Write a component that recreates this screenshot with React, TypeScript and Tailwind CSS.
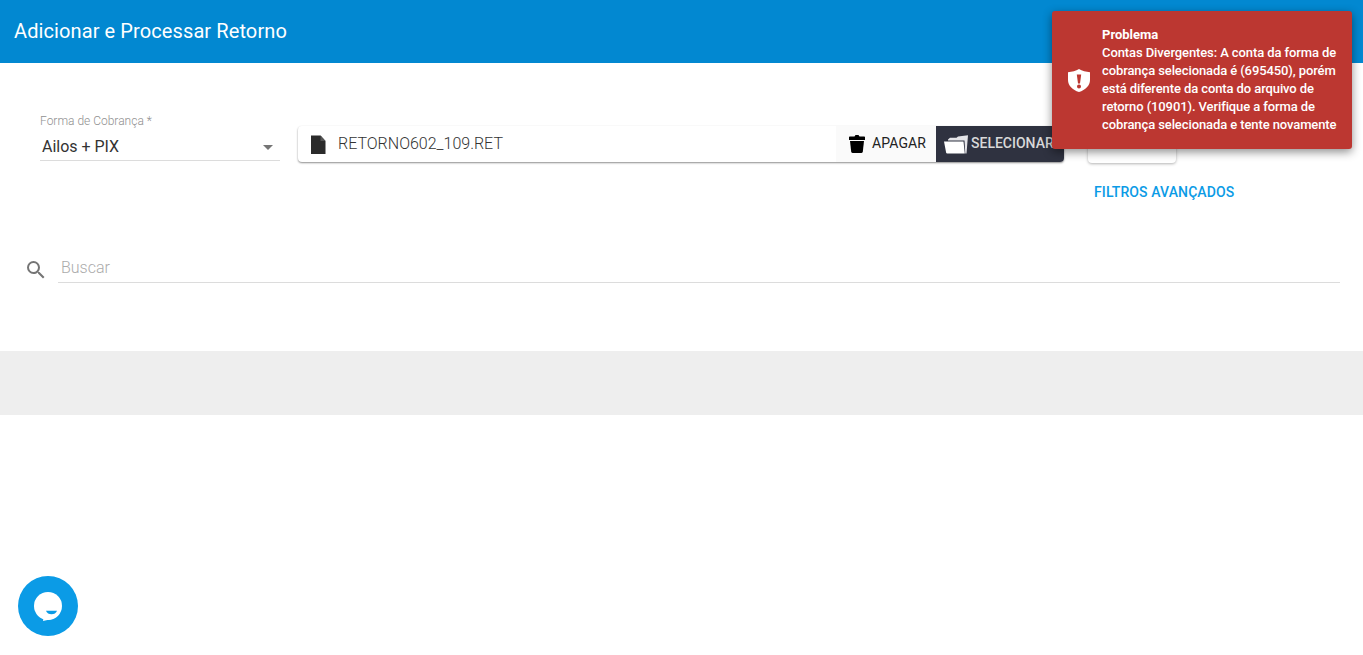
import { MdSearch, MdArrowDropDown } from "react-icons/md";

const font = { fontFamily: "Roboto, sans-serif" };

const FileIcon = () => (
  <svg viewBox="0 0 15 19" className="w-[15px] h-[19px] shrink-0">
    <path fill="#2b2b2b" d="M0 0.500h9.500l5 5.500v13H0Z" />
    <path fill="#555555" d="M9.500 0.500v5.500h5Z" />
  </svg>
);

const TrashIcon = () => (
  <svg viewBox="0 0 16 18" className="w-[16px] h-[18px] shrink-0">
    <path fill="#000000" d="M5.500 1.500 6.500 0h3l1 1.500H15c.6 0 1 .4 1 1V5H0V2.500c0-.6.4-1 1-1Z" />
    <path fill="#000000" d="M1 6h14l-1.200 10.800c-.1.700-.6 1.200-1.300 1.200h-9c-.7 0-1.200-.5-1.300-1.200Z" />
  </svg>
);

const FolderIcon = () => (
  <svg viewBox="0 0 24 19" className="w-[24px] h-[19px] shrink-0">
    <path fill="#e4e4e8" d="M4 4.500 6 2.800h6.500L14 1.500 24 0.300 22.500 18.500h-1.200L20.500 5.500H4Z" />
    <path fill="#ffffff" d="M0 6.500h19.500l1.300 12H3.200c-.6 0-1-.3-1.100-.9Z" />
  </svg>
);

const FormaCobranca = () => (
  <div className="w-[240px] ml-[40px] mr-[18px] shrink-0 mt-[-12px]">
    <div className="text-[12px] leading-[14px] text-[#909090] font-light h-[14px]">Forma de Cobrança *</div>
    <div className="flex items-center justify-between h-[26px] mt-[6px] pl-[2px] border-b border-[#dcdcdc] box-content">
      <span className="text-[16px] text-[#333333] mt-[-1px] tracking-[-0.03px]">Ailos + PIX</span>
      <MdArrowDropDown size={24} className="text-[#757575]" />
    </div>
  </div>
);

const FileInput = () => (
  <div className="w-[766px] h-[36px] shrink-0 flex items-center rounded-[4px] bg-white shadow-[0_1px_2px_rgba(0,0,0,0.45)] overflow-hidden">
    <div className="flex-1 flex items-center pl-[13px] h-full">
      <FileIcon />
      <span className="ml-[12px] text-[16px] text-[#333333] font-light">RETORNO602_109.RET</span>
    </div>
    <button className="w-[100px] h-full flex items-center pl-[13px] gap-[7px] bg-[#fafafa] text-[14px] font-normal text-[#222222] tracking-[0.1px]">
      <TrashIcon />
      <span className="mt-[-1px]">APAGAR</span>
    </button>
    <button className="w-[128px] h-full flex items-center pl-[8px] gap-[3px] bg-[#2f3240] text-[14px] font-medium text-[#d9d9d9]">
      <FolderIcon />
      <span className="mt-[-1px]">SELECIONAR</span>
    </button>
  </div>
);

const Toast = () => (
  <div className="absolute top-[11px] left-[1052px] w-[300px] h-[138px] bg-[#bc3731] rounded-[3px] shadow-[0_3px_10px_rgba(0,0,0,0.45)] flex items-center text-white">
    <svg viewBox="0 0 22 23" className="w-[22px] h-[23px] ml-[16px] shrink-0">
      <path
        fill="#ffffff"
        d="M11 0C8 1.800 4 3 0 3.200V11c0 5.500 4.500 10 11 12 6.500-2 11-6.500 11-12V3.200C18 3 14 1.800 11 0Zm-2.200 5.500h4.400L12 14.500h-2L8.800 5.500ZM11 15.500a2 2 0 1 1 0 4 2 2 0 0 1 0-4Z"
      />
    </svg>
    <div className="ml-[12px] text-[13px] leading-[18px] font-medium tracking-[-0.1px] whitespace-nowrap">
      <div className="font-bold tracking-normal">Problema</div>
      <div>Contas Divergentes: A conta da forma de</div>
      <div>cobrança selecionada é (695450), porém</div>
      <div>está diferente da conta do arquivo de</div>
      <div>retorno (10901). Verifique a forma de</div>
      <div>cobrança selecionada e tente novamente</div>
    </div>
  </div>
);

const ChatBubble = () => (
  <div className="absolute left-[18px] top-[576px] w-[60px] h-[60px] rounded-full bg-[#0b9be6] flex items-center justify-center">
    <svg viewBox="0 0 32 32" className="w-[32px] h-[32px]">
      <circle cx="16" cy="16" r="14" fill="#ffffff" />
      <path fill="#ffffff" d="M11 31 12 25 20 29Z" />
      <path fill="#0b9be6" d="M14 20.700h11c-.8 2.400-3 3.600-5.500 3.600s-4.700-1.200-5.500-3.600Z" />
    </svg>
  </div>
);

export default function App() {
  return (
    <div className="relative w-full h-[655px] bg-white overflow-hidden" style={font}>
      <header className="h-[63px] bg-[#0288d1] flex items-center pl-[14px]">
        <h1 className="text-[20px] font-normal text-white tracking-[0.1px] mt-[-1px]">Adicionar e Processar Retorno</h1>
      </header>

      <div className="flex items-start pt-[63px]">
        <FormaCobranca />
        <FileInput />
        <div className="ml-[24px] w-[88px] flex flex-col items-start">
          <div className="w-[88px] h-[37px] rounded-[4px] bg-white shadow-[0_1px_3px_rgba(0,0,0,0.3)]" />
          <span className="mt-[21px] ml-[6px] text-[14px] leading-[16px] font-medium text-[#0b9be6] whitespace-nowrap tracking-[0.1px]">
            FILTROS AVANÇADOS
          </span>
        </div>
      </div>

      <div className="flex items-center mt-[52px] pl-[24px] pr-[23px]">
        <MdSearch size={24} className="text-[#757575] mr-[10px] mt-[4px] shrink-0" />
        <div className="flex-1 h-[31px] border-b border-[#dcdcdc] flex items-center pl-[3px]">
          <span className="text-[16px] text-[#ababab] font-light mt-[2px]">Buscar</span>
        </div>
      </div>

      <div className="mt-[68px] h-[64px] bg-[#eeeeee]" />

      <Toast />
      <ChatBubble />
    </div>
  );
}
